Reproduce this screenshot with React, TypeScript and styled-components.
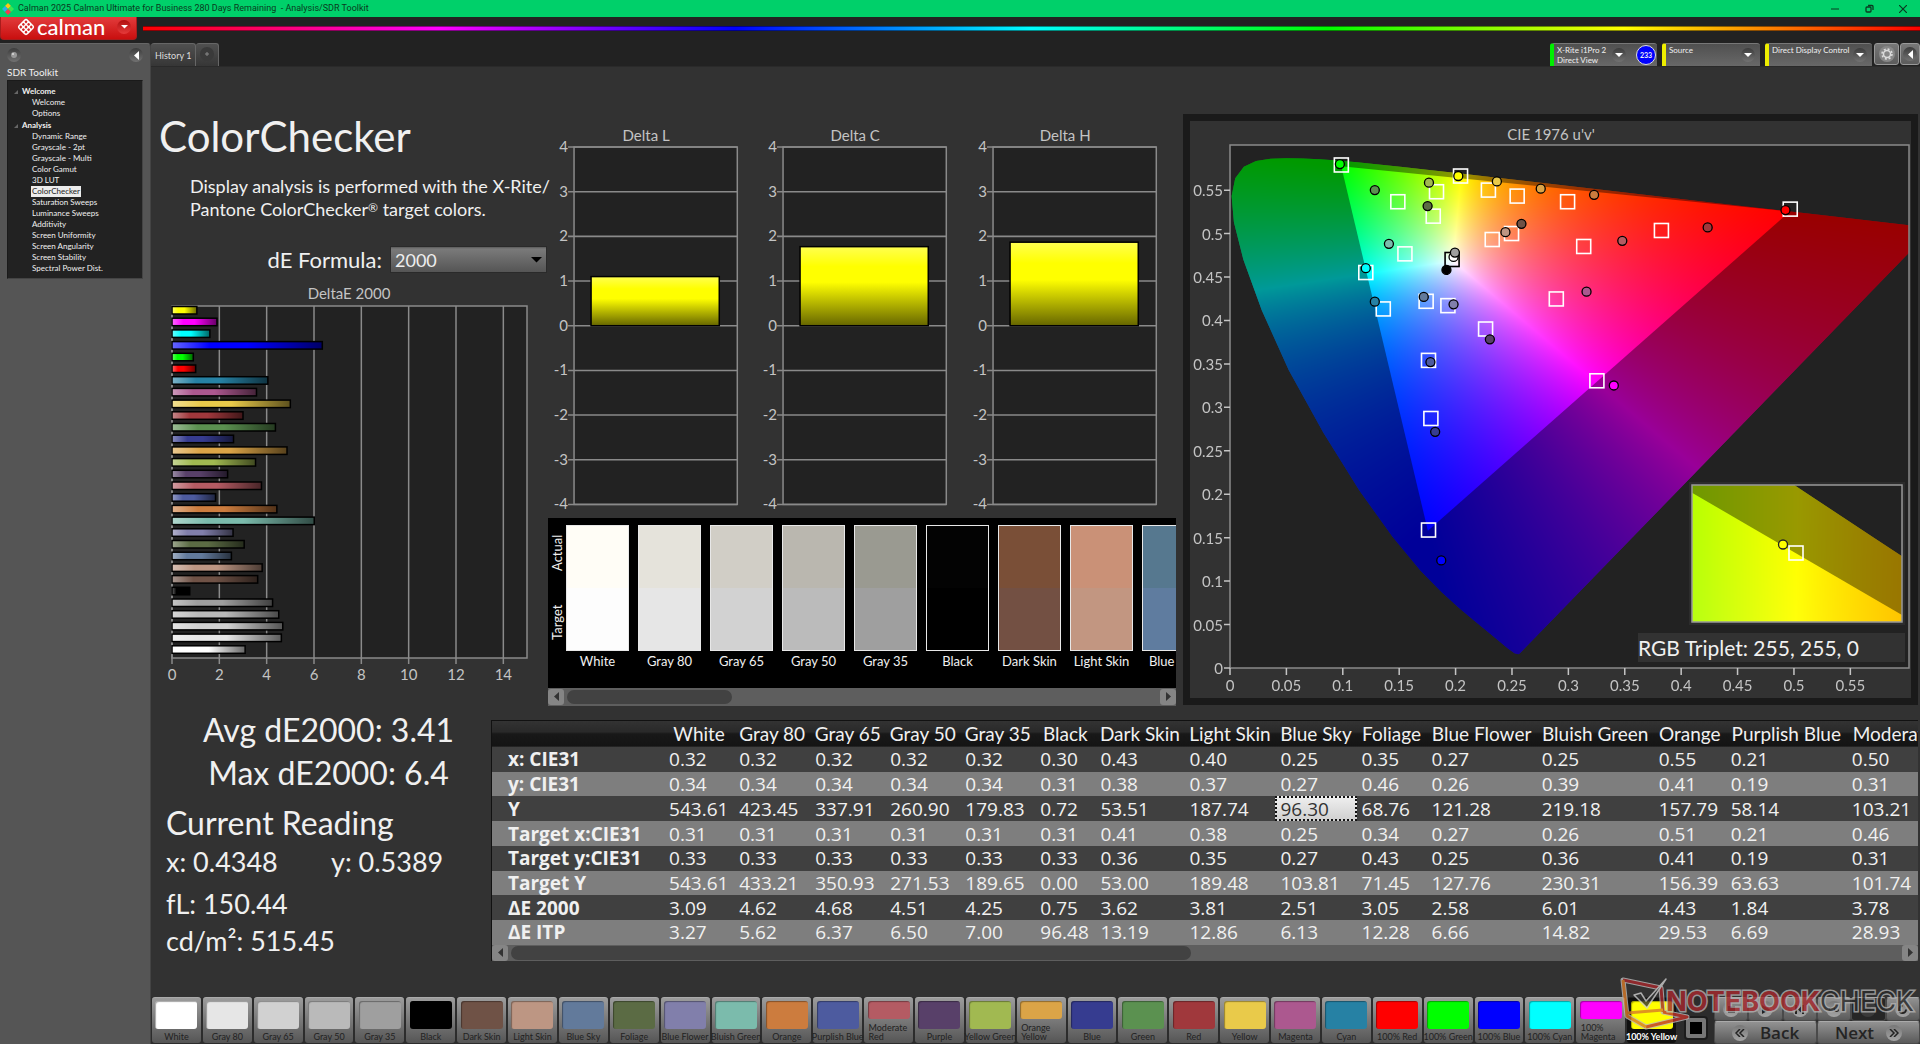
import React, { useEffect, useRef } from 'react';
import styled, { createGlobalStyle, css } from 'styled-components';

const GlobalStyle = createGlobalStyle`
  *, *::before, *::after { box-sizing: border-box; }
  html, body { margin: 0; padding: 0; background: #323232; }
  body {
    font-family: Lato, 'Open Sans', sans-serif;
    color: #f0f0f0;
    overflow: hidden;
  }
  button, select { font-family: inherit; color: inherit; margin: 0; padding: 0; border: 0; background: none; }
  h1, h2, p, ul, dl, dd { margin: 0; padding: 0; }
  ul { list-style: none; }
`;

/* ---------- data ---------- */

type Patch = { name: string; color: string; wrap?: boolean; dE: number };

const patches: Patch[] = [
  { name: 'White', color: '#ffffff', dE: 3.09 },
  { name: 'Gray 80', color: '#e6e6e6', dE: 4.62 },
  { name: 'Gray 65', color: '#d1d1d1', dE: 4.68 },
  { name: 'Gray 50', color: '#bababa', dE: 4.51 },
  { name: 'Gray 35', color: '#9f9f9f', dE: 4.25 },
  { name: 'Black', color: '#000000', dE: 0.75 },
  { name: 'Dark Skin', color: '#6f5246', dE: 3.62 },
  { name: 'Light Skin', color: '#bd9683', dE: 3.81 },
  { name: 'Blue Sky', color: '#627a9b', dE: 2.51 },
  { name: 'Foliage', color: '#5b6b44', dE: 3.05 },
  { name: 'Blue Flower', color: '#817fab', dE: 2.58 },
  { name: 'Bluish Green', color: '#7bbbac', dE: 6.01 },
  { name: 'Orange', color: '#cc7c3e', dE: 4.43 },
  { name: 'Purplish Blue', color: '#4d5b9f', dE: 1.84 },
  { name: 'Moderate Red', color: '#b45b63', wrap: true, dE: 3.78 },
  { name: 'Purple', color: '#584069', dE: 2.35 },
  { name: 'Yellow Green', color: '#a1b951', dE: 3.53 },
  { name: 'Orange Yellow', color: '#dba447', wrap: true, dE: 4.86 },
  { name: 'Blue', color: '#363c90', dE: 2.6 },
  { name: 'Green', color: '#5b9150', dE: 4.37 },
  { name: 'Red', color: '#a0383c', dE: 3.0 },
  { name: 'Yellow', color: '#e9ca4a', dE: 5.0 },
  { name: 'Magenta', color: '#ac588f', dE: 3.57 },
  { name: 'Cyan', color: '#2681a4', dE: 4.05 },
  { name: '100% Red', color: '#ff0000', dE: 1.0 },
  { name: '100% Green', color: '#00ff00', dE: 0.9 },
  { name: '100% Blue', color: '#0000ff', dE: 6.35 },
  { name: '100% Cyan', color: '#00ffff', dE: 1.6 },
  { name: '100% Magenta', color: '#ff00ff', wrap: true, dE: 1.9 },
  { name: '100% Yellow', color: '#ffff00', dE: 1.05 },
];

const swatches = [
  { name: 'White', actual: '#fffdf6', target: '#fdfdfd' },
  { name: 'Gray 80', actual: '#e5e3db', target: '#e6e6e6' },
  { name: 'Gray 65', actual: '#d1cec6', target: '#d2d2d2' },
  { name: 'Gray 50', actual: '#bab7af', target: '#bbbbbb' },
  { name: 'Gray 35', actual: '#9a9a91', target: '#9f9f9f' },
  { name: 'Black', actual: '#030303', target: '#000000' },
  { name: 'Dark Skin', actual: '#7a4f37', target: '#735043' },
  { name: 'Light Skin', actual: '#ca9177', target: '#c29681' },
  { name: 'Blue Sky', actual: '#56788f', target: '#5f7c9f' },
];

const columns = [
  { name: 'White', width: 70 },
  { name: 'Gray 80', width: 76 },
  { name: 'Gray 65', width: 75 },
  { name: 'Gray 50', width: 75 },
  { name: 'Gray 35', width: 75 },
  { name: 'Black', width: 60 },
  { name: 'Dark Skin', width: 89 },
  { name: 'Light Skin', width: 91 },
  { name: 'Blue Sky', width: 81 },
  { name: 'Foliage', width: 70 },
  { name: 'Blue Flower', width: 110 },
  { name: 'Bluish Green', width: 117 },
  { name: 'Orange', width: 72 },
  { name: 'Purplish Blue', width: 121 },
  { name: 'Moderate Red', width: 130 },
];

const readings: [string, string[]][] = [
  ['x: CIE31', ['0.32', '0.32', '0.32', '0.32', '0.32', '0.30', '0.43', '0.40', '0.25', '0.35', '0.27', '0.25', '0.55', '0.21', '0.50']],
  ['y: CIE31', ['0.34', '0.34', '0.34', '0.34', '0.34', '0.31', '0.38', '0.37', '0.27', '0.46', '0.26', '0.39', '0.41', '0.19', '0.31']],
  ['Y', ['543.61', '423.45', '337.91', '260.90', '179.83', '0.72', '53.51', '187.74', '96.30', '68.76', '121.28', '219.18', '157.79', '58.14', '103.21']],
  ['Target x:CIE31', ['0.31', '0.31', '0.31', '0.31', '0.31', '0.31', '0.41', '0.38', '0.25', '0.34', '0.27', '0.26', '0.51', '0.21', '0.46']],
  ['Target y:CIE31', ['0.33', '0.33', '0.33', '0.33', '0.33', '0.33', '0.36', '0.35', '0.27', '0.43', '0.25', '0.36', '0.41', '0.19', '0.31']],
  ['Target Y', ['543.61', '433.21', '350.93', '271.53', '189.65', '0.00', '53.00', '189.48', '103.81', '71.45', '127.76', '230.31', '156.39', '63.63', '101.74']],
  ['ΔE 2000', ['3.09', '4.62', '4.68', '4.51', '4.25', '0.75', '3.62', '3.81', '2.51', '3.05', '2.58', '6.01', '4.43', '1.84', '3.78']],
  ['ΔE ITP', ['3.27', '5.62', '6.37', '6.50', '7.00', '96.48', '13.19', '12.86', '6.13', '12.28', '6.66', '14.82', '29.53', '6.69', '28.93']],
];

const tree = [
  { title: 'Welcome', items: ['Welcome', 'Options'] },
  {
    title: 'Analysis',
    items: ['Dynamic Range', 'Grayscale - 2pt', 'Grayscale - Multi', 'Color Gamut', '3D LUT', 'ColorChecker', 'Saturation Sweeps', 'Luminance Sweeps', 'Additivity', 'Screen Uniformity', 'Screen Angularity', 'Screen Stability', 'Spectral Power Dist.'],
  },
];

const targetPoints: [number, number][] = [
  [0.0987, 0.579], [0.2044, 0.5663], [0.1831, 0.5482], [0.1488, 0.5367], [0.2291, 0.5501],
  [0.2546, 0.5432], [0.2993, 0.5367], [0.4967, 0.5282], [0.1802, 0.5201], [0.2496, 0.5001],
  [0.2325, 0.4932], [0.3825, 0.5036], [0.3136, 0.4852], [0.1551, 0.4767], [0.1204, 0.4552],
  [0.1359, 0.4133], [0.1739, 0.4221], [0.1932, 0.4171], [0.2266, 0.3902], [0.2893, 0.4248],
  [0.3253, 0.3306], [0.176, 0.3541], [0.1781, 0.2872], [0.176, 0.1588],
];

const measuredPoints: [number, number, string][] = [
  [0.0974, 0.5801, '#00ff00'], [0.2024, 0.5663, '#ffff00'], [0.1764, 0.5586, '#a1b951'],
  [0.1284, 0.5501, '#5b9150'], [0.2366, 0.5601, '#e9ca4a'], [0.2755, 0.5517, '#dba447'],
  [0.3228, 0.5447, '#cc7c3e'], [0.4925, 0.5271, '#ff0000'], [0.1752, 0.5317, '#5b6b44'],
  [0.2584, 0.5113, '#6f5246'], [0.2442, 0.5017, '#bd9683'], [0.4235, 0.5071, '#a0383c'],
  [0.3478, 0.4917, '#b45b63'], [0.1409, 0.4882, '#7bbbac'], [0.1982, 0.4732, '#ffffff'],
  [0.1994, 0.4782, '#9f9f9f'], [0.1919, 0.4582, '#000000'], [0.1204, 0.4602, '#00ffff'],
  [0.1284, 0.4217, '#2681a4'], [0.1718, 0.4271, '#627a9b'], [0.1982, 0.4186, '#817fab'],
  [0.3161, 0.4332, '#ac588f'], [0.2304, 0.3783, '#584069'], [0.3403, 0.3252, '#ff00ff'],
  [0.1777, 0.3521, '#4d5b9f'], [0.1819, 0.2718, '#363c90'], [0.1873, 0.1238, '#0000ff'],
];

/* CIE 1931 spectral locus, x and y */
const locus: [number, number][] = [
  [0.1741, 0.005], [0.1733, 0.0048], [0.1714, 0.0051], [0.1689, 0.0069], [0.1644, 0.0109],
  [0.1566, 0.0177], [0.151, 0.0227], [0.144, 0.0297], [0.1355, 0.0399], [0.1241, 0.0578],
  [0.1096, 0.0868], [0.0913, 0.1327], [0.0687, 0.2007], [0.0454, 0.295], [0.0235, 0.4127],
  [0.0082, 0.5384], [0.0039, 0.6548], [0.0139, 0.7502], [0.0389, 0.812], [0.0743, 0.8338],
  [0.1142, 0.8262], [0.1547, 0.8059], [0.1929, 0.7816], [0.2296, 0.7543], [0.2658, 0.7243],
  [0.3016, 0.6923], [0.3373, 0.6589], [0.3731, 0.6245], [0.4087, 0.5896], [0.4441, 0.5547],
  [0.4788, 0.5202], [0.5125, 0.4866], [0.5752, 0.4242], [0.627, 0.3725], [0.6658, 0.334],
  [0.6915, 0.3083], [0.719, 0.2809], [0.7347, 0.2653],
];

const gamut: [number, number][] = [[0.68, 0.32], [0.265, 0.69], [0.15, 0.06]];

const toUv = ([x, y]: [number, number]): [number, number] => {
  const d = -2 * x + 12 * y + 3;
  return [(4 * x) / d, (9 * y) / d];
};

/* ---------- window frame ---------- */

const Window = styled.div`
  display: flex;
  flex-direction: column;
  min-height: 100vh;
  background: #222;
`;

const TitleBar = styled.header`
  display: flex;
  align-items: center;
  gap: 4px;
  height: 17px;
  padding-left: 2px;
  background: #00d06a;
  color: #0a3a20;
  font: 9px/17px Roboto, 'Open Sans', sans-serif;
  white-space: pre;
`;

const WindowButtons = styled.div`
  display: flex;
  margin-left: auto;
`;

const WindowButton = styled.button`
  display: grid;
  place-items: center;
  width: 34px;
  height: 17px;
`;

const BrandBar = styled.div`
  display: flex;
  height: 26px;
  gap: 6px;
`;

const BrandButton = styled.button`
  display: flex;
  align-items: center;
  justify-content: space-between;
  width: 137px;
  height: 23px;
  padding: 0 5px 2px 16px;
  border: 1px solid #a91c1c;
  border-top: 0;
  border-radius: 0 0 4px 4px;
  background: linear-gradient(#e23c3c, #c90f0f);
  color: #fff;
`;

const BrandName = styled.span`
  display: flex;
  align-items: center;
  gap: 2px;
  font: 500 22px/20px Lato, sans-serif;
`;

const BrandArrow = styled.span`
  display: grid;
  place-items: center;
  width: 14px;
  height: 14px;
  border-radius: 50%;
  background: linear-gradient(#b01010, #e63a3a);
`;

const Rainbow = styled.div`
  flex: 1;
  height: 5px;
  margin-top: 9px;
  border: 1px solid rgba(0, 0, 0, 0.45);
  border-width: 1px 0;
  background: linear-gradient(90deg, #f00, #f0f, #00f, #0ff, #0f0, #ff0, #f00);
`;

const Body = styled.div`
  display: flex;
  flex: 1;
`;

/* ---------- sidebar ---------- */

const Sidebar = styled.aside`
  flex: 0 0 150px;
  padding: 4px 7px;
  border-top: 1px solid #666;
  border-right: 1px solid #444;
  border-radius: 0 4px 0 0;
  background: #555;
`;

const SidebarTools = styled.div`
  display: flex;
  justify-content: space-between;
  margin-bottom: 2px;
`;

const RoundButton = styled.button<{ $size: number }>`
  display: grid;
  place-items: center;
  width: ${(p) => p.$size}px;
  height: ${(p) => p.$size}px;
  border-radius: 50%;
  background: linear-gradient(#3c3c3c, #727272);
`;

const SidebarTitle = styled.h2`
  font-size: 10px;
  font-weight: 400;
  line-height: 16px;
`;

const TreeBox = styled.nav`
  width: 136px;
  padding: 4px 0;
  border: 1px solid #1a1a1a;
  border-right-color: #444;
  border-bottom-color: #444;
  background: #222;
  font-size: 8px;
`;

const TreeGroup = styled.div`
  padding-left: 14px;
  font-weight: 700;
  line-height: 11px;
`;

const TreeHeading = styled.div`
  position: relative;
  height: 12px;
  line-height: 12px;
  &::before {
    content: '';
    position: absolute;
    left: -8px;
    top: 5px;
    border: 2px solid transparent;
    border-right-color: #666;
    border-bottom-color: #666;
  }
`;

const TreeItem = styled.a<{ $active: boolean }>`
  display: block;
  width: max-content;
  margin-left: 9px;
  padding: 0 1px;
  line-height: 11px;
  font-weight: 400;
  color: #f0f0f0;
  text-decoration: none;
  ${(p) => p.$active && css`
    background: #ececec;
    color: #222;
  `}
`;

/* ---------- top tabs ---------- */

const Main = styled.main`
  display: flex;
  flex: 1;
  flex-direction: column;
  min-width: 0;
  background: #323232;
`;

const TabBar = styled.div`
  display: flex;
  height: 23px;
  background: #222;
`;

const Tab = styled.button`
  height: 23px;
  padding: 0 4px;
  border: 1px solid #666;
  border-bottom: 0;
  border-left: 0;
  border-radius: 3px 3px 0 0;
  background: linear-gradient(#505050, #363636);
  font-size: 9px;
  color: #ddd;
  & + & { color: #888; }
`;

const DeviceGroup = styled.div`
  display: flex;
  gap: 5px;
  margin-left: auto;
`;

const Device = styled.div<{ $mark: string; $width: number }>`
  display: flex;
  align-items: flex-start;
  justify-content: space-between;
  width: ${(p) => p.$width}px;
  height: 23px;
  padding: 1px 1px 0 3px;
  border-top: 1px solid #777;
  border-left: 4px solid ${(p) => p.$mark};
  border-radius: 3px 3px 0 0;
  background: linear-gradient(#505050, #686868);
  font-size: 8px;
  line-height: 10px;
  white-space: pre;
`;

const DeviceArrow = styled(RoundButton)`
  margin: 3px 4px 0 0;
`;

const Meter = styled.span`
  display: grid;
  place-items: center;
  width: 20px;
  height: 20px;
  border: 1px solid #ddd;
  border-radius: 50%;
  background: #00f;
  font-size: 7px;
  font-weight: 700;
`;

const ToolButtons = styled.div`
  display: flex;
  gap: 1px;
  margin-left: -3px;
`;

const ToolButton = styled.button<{ $width: number }>`
  display: grid;
  place-items: center;
  width: ${(p) => p.$width}px;
  height: 22px;
  border: 1px solid #999;
  border-radius: 3px;
  background: linear-gradient(#777, #5c5c5c);
`;

/* ---------- analysis area ---------- */

const Workspace = styled.div`
  flex: 1;
  display: flex;
  flex-direction: column;
  padding: 47px 2px 0 0;
  border-top: 1px solid #2a2a2a;
`;

const TopGrid = styled.section`
  display: grid;
  grid-template-columns: 397fr 628fr 7px 735fr;
  align-items: start;
`;

const Intro = styled.div`
  display: flex;
  flex-direction: column;
  min-width: 0;
`;

const Title = styled.h1`
  padding: 0 0 0 8px;
  font-size: 42px;
  font-weight: 400;
  line-height: 44px;
`;

const Description = styled.p`
  margin: 17px 0 0 39px;
  font-size: 18px;
  line-height: 23px;
  white-space: nowrap;
`;

const Registered = styled.span`
  font-size: 12px;
  line-height: 12px;
  vertical-align: 4px;
`;

const FormulaRow = styled.div`
  display: flex;
  align-items: center;
  justify-content: flex-end;
  gap: 8px;
  margin-top: 25px;
  padding-right: 1px;
  font-size: 22px;
  line-height: 26px;
`;

const SelectWrap = styled.div`
  position: relative;
  height: 27px;
  svg { position: absolute; right: 5px; top: 11px; pointer-events: none; }
`;

const Select = styled.select`
  appearance: none;
  display: block;
  width: 157px;
  height: 27px;
  padding: 0 4px;
  border: 1px solid #2a2a2a;
  background: linear-gradient(#5a5a5a, #7a7a7a 8%, #555);
  font-size: 18px;
  color: #eee;
  cursor: pointer;
`;

const Chart = styled.svg`
  display: block;
  width: 100%;
  height: auto;
  font-family: Lato, 'Open Sans', sans-serif;
  font-size: 15px;
`;

const DeltaEBox = styled.div`
  margin-top: 11px;
`;

const Middle = styled.div`
  min-width: 0;
  padding-top: 10px;
`;

const DeltaRow = styled.div`
  display: grid;
  grid-template-columns: repeat(3, 1fr);
`;

const SwatchPanel = styled.div`
  display: flex;
  height: 170px;
  overflow: hidden;
  background: #000;
`;

const SwatchAxis = styled.div`
  display: flex;
  flex: 0 0 18px;
  flex-direction: column-reverse;
  justify-content: flex-end;
  align-items: center;
  padding-top: 7px;
  font-size: 13px;
  line-height: 18px;
  span {
    height: 55px;
    writing-mode: vertical-rl;
    transform: rotate(180deg);
    text-align: center;
  }
  span + span { margin-bottom: 15px; }
`;

const SwatchTrack = styled.ul`
  display: flex;
  gap: 9px;
  padding-top: 7px;
`;

const Swatch = styled.li`
  flex: 0 0 63px;
  font-size: 13px;
  line-height: 20px;
  text-align: center;
  white-space: nowrap;
`;

const SwatchColors = styled.div<{ $actual: string; $target: string }>`
  height: 126px;
  border: 1px solid #e8e8e8;
  background: linear-gradient(${(p) => p.$actual} 50%, ${(p) => p.$target} 50%);
`;

const ScrollBar = styled.div<{ $height: number }>`
  display: flex;
  align-items: center;
  height: ${(p) => p.$height}px;
  background: #5e5e5e;
`;

const ScrollArrow = styled.button`
  display: grid;
  place-items: center;
  flex: 0 0 16px;
  height: 16px;
  border-radius: 3px;
  background: #858585;
`;

const ScrollTrack = styled.div`
  flex: 1;
  height: 14px;
  padding: 0 3px;
`;

const ScrollThumb = styled.div<{ $share: number }>`
  width: ${(p) => p.$share}%;
  height: 14px;
  border-radius: 7px;
  background: #424242;
`;

const CiePanel = styled.div`
  grid-column: 4;
  border: 7px solid #1a1a1a;
  background: #323232;
`;

/* ---------- readings ---------- */

const BottomGrid = styled.section`
  display: grid;
  grid-template-columns: minmax(0, 340fr) minmax(0, 1427fr);
`;

const Stats = styled.div`
  padding: 2px 0 0 15px;
  white-space: nowrap;
`;

const Summary = styled.p`
  font-size: 32px;
  line-height: 43px;
  text-align: center;
`;

const StatsHeading = styled.h2`
  margin-top: 8px;
  font-size: 32px;
  font-weight: 400;
  line-height: 42px;
`;

const StatLine = styled.p<{ $height: number }>`
  display: flex;
  font-size: 27px;
  line-height: ${(p) => p.$height}px;
  span:first-child { flex: 0 0 165px; }
`;

const TablePanel = styled.div`
  min-width: 0;
  margin-top: 14px;
  overflow: hidden;
  border-left: 1px solid #111;
`;

const TableClip = styled.div`
  overflow: hidden;
`;

const Table = styled.table`
  table-layout: fixed;
  width: 1485px;
  height: 225px;
  border-collapse: collapse;
  font: 19px/20px 'Open Sans', 'Noto Sans', sans-serif;
  color: #f0f0f0;
`;

const HeadCell = styled.th`
  height: 27px;
  padding: 0 4px;
  border-top: 1px solid #111;
  background: linear-gradient(#333, #292929 45%, #181818 50%, #141414);
  font: 400 19px/20px Lato, sans-serif;
  text-align: center;
  white-space: nowrap;
`;

const Row = styled.tr`
  background: #404040;
  &:nth-child(even) { background: #7e7e7e; }
`;

const RowLabel = styled.th`
  padding: 0 0 0 16px;
  font-weight: 700;
  text-align: left;
  white-space: nowrap;
`;

const Cell = styled.td<{ $selected: boolean }>`
  padding: 0 0 0 5px;
  ${(p) => p.$selected && css`
    outline: 2px dotted #111;
    outline-offset: -2px;
    background: linear-gradient(#f0f0f0, #cfcfcf);
    color: #333;
  `}
`;

/* ---------- bottom strip ---------- */

const Strip = styled.footer`
  position: relative;
  display: flex;
  height: 47px;
  padding-left: 1px;
  background: #2c2c2c;
`;

const PatchList = styled.div`
  display: grid;
  flex: 1;
  grid-template-columns: repeat(30, minmax(0, 1fr));
  height: 46px;
`;

const PatchButton = styled.button<{ $selected: boolean }>`
  display: flex;
  flex-direction: column;
  align-items: center;
  margin-right: 2px;
  padding-top: 3px;
  border-top: 1px solid #aaa;
  border-radius: 3px;
  background: linear-gradient(#9c9c9c, #555);
  color: #222;
  font-size: 9px;
  line-height: 9px;
  white-space: nowrap;
  ${(p) => p.$selected && css`
    border-color: #222;
    background: #111;
    color: #fff;
    font-weight: 700;
  `}
`;

const PatchColor = styled.span<{ $color: string; $short: boolean }>`
  width: 42px;
  height: ${(p) => (p.$short ? 18 : 28)}px;
  margin-bottom: ${(p) => (p.$short ? 4 : 3)}px;
  border-radius: 3px;
  background: ${(p) => p.$color};
  box-shadow: inset 1px 1px 1px rgba(0, 0, 0, 0.35);
`;

const PatchName = styled.span<{ $wrap: boolean }>`
  ${(p) => p.$wrap && css`
    width: 40px;
    text-align: left;
    white-space: normal;
  `}
`;

const StopCell = styled.div`
  display: grid;
  place-items: end center;
  width: 36px;
  padding-bottom: 4px;
`;

const StopButton = styled.button`
  display: grid;
  place-items: center;
  width: 24px;
  height: 24px;
  border: 2px solid #1c1c1c;
  border-radius: 4px;
  background: #777;
`;

const Transport = styled.div`
  display: grid;
  grid-template-rows: 24px 23px;
  width: 206px;
`;

const TransportRow = styled.div`
  display: flex;
`;

const TransportButton = styled.button<{ $dark?: boolean }>`
  display: flex;
  align-items: center;
  justify-content: center;
  flex: 1;
  gap: 12px;
  border: 1px solid #4a4a4a;
  border-top-color: #aaa;
  border-radius: 3px;
  background: ${(p) => (p.$dark ? '#262626' : 'linear-gradient(#929292, #5a5a5a)')};
  color: #242424;
  font: 600 17px/18px 'Open Sans', sans-serif;
`;

const Disc = styled.span<{ $dim?: boolean }>`
  display: grid;
  place-items: center;
  width: 16px;
  height: 16px;
  border-radius: 50%;
  background: ${(p) => (p.$dim ? '#3a3a3a' : 'linear-gradient(#777, #a5a5a5)')};
`;

const Watermark = styled.div`
  position: absolute;
  right: 6px;
  bottom: 13px;
  display: flex;
  align-items: center;
  pointer-events: none;
  opacity: 0.8;
`;

const WatermarkText = styled.span`
  margin: -4px 0 0 -26px;
  font: 400 27px/30px Inter, sans-serif;
  color: #2b2b2b;
  -webkit-text-stroke: 3px #b0b0b0;
  paint-order: stroke fill;
  b { color: #a5282c; font-weight: 700; }
`;

/* ---------- small drawings ---------- */

const ArrowDown = ({ size = 8, color = '#fff' }: { size?: number; color?: string }) => (
  <svg width={size} height={size / 2} viewBox="0 0 8 4"><path d="M0 0h8L4 4z" fill={color} /></svg>
);

const ArrowSide = ({ right = false, color = '#fff' }: { right?: boolean; color?: string }) => (
  <svg width="5" height="9" viewBox="0 0 5 9"><path d={right ? 'M0 0v9l5-4.500z' : 'M5 0v9l-5-4.500z'} fill={color} /></svg>
);

const CalmanIcon = () => (
  <svg width="18" height="20" viewBox="0 0 18 20">
    <g transform="translate(9 10) rotate(45)">
      <rect x="-6.500" y="-6.500" width="13" height="13" rx="3" fill="#fff" />
      {[-3.7, 0, 3.7].map((x) => [-3.7, 0, 3.7].map((y) => (
        <rect key={`${x}${y}`} x={x - 1.2} y={y - 1.2} width="2.400" height="2.400" rx=".8" fill="#d42525" />
      )))}
    </g>
  </svg>
);

const AppIcon = () => (
  <svg width="12" height="14" viewBox="0 0 12 14">
    <path d="M6 1l3 3-3 3-3-3z" fill="#ffc814" />
    <path d="M3 4l3 3-3 3-3-3z" fill="#28b4e6" />
    <path d="M9 4l3 3-3 3-3-3z" fill="#3ce650" />
    <path d="M6 7l3 3-3 3-3-3z" fill="#f03c50" />
  </svg>
);

/* ---------- charts ---------- */

const LINE = '#8a8a8a';
const PLOT = '#222';
const LABEL = '#c4c4c4';

function DeltaEChart() {
  const left = 21;
  const right = 376;
  const top = 22;
  const bottom = 374;
  const unit = (right - left) / 15;
  const bars = [...patches].reverse();
  return (
    <Chart viewBox="0 0 397 403" role="img" aria-label="DeltaE 2000">
      <defs>
        <linearGradient id="barShade">
          <stop offset="0" stopColor="#fff" stopOpacity=".4" />
          <stop offset=".25" stopColor="#fff" stopOpacity="0" />
          <stop offset=".5" stopColor="#000" stopOpacity="0" />
          <stop offset="1" stopColor="#000" stopOpacity=".6" />
        </linearGradient>
      </defs>
      <text x="198" y="15" textAnchor="middle" fill={LABEL}>DeltaE 2000</text>
      <rect x={left} y={top} width={right - left} height={bottom - top} fill={PLOT} stroke={LINE} strokeWidth="1.500" />
      {[0, 2, 4, 6, 8, 10, 12, 14].map((n) => (
        <g key={n}>
          <path d={`M${left + n * unit} ${top}V${bottom + 6}`} stroke={LINE} strokeWidth="1.500" />
          <text x={left + n * unit} y={bottom + 22} textAnchor="middle" fill={LABEL}>{n}</text>
        </g>
      ))}
      {bars.map((b, i) => {
        const y = 22.5 + i * 11.7;
        return (
          <g key={b.name}>
            <rect x={left} y={y} width={b.dE * unit} height="7.500" fill={b.color} />
            <rect x={left} y={y} width={b.dE * unit} height="7.500" fill="url(#barShade)" stroke="#000" strokeWidth="1.500" />
          </g>
        );
      })}
    </Chart>
  );
}

function DeltaChart({ title, value }: { title: string; value: number }) {
  const left = 26;
  const right = 189;
  const top = 23;
  const unit = 44.6;
  const zero = top + 4 * unit;
  return (
    <Chart viewBox="0 0 209 393" role="img" aria-label={title}>
      <defs>
        <linearGradient id="yellowBar" x2="0" y2="1">
          <stop offset="0" stopColor="#ffff50" />
          <stop offset=".25" stopColor="#ffff00" />
          <stop offset=".45" stopColor="#ffff00" />
          <stop offset="1" stopColor="#666600" />
        </linearGradient>
      </defs>
      <text x="98" y="17" textAnchor="middle" fill={LABEL}>{title}</text>
      <rect x={left} y={top} width={right - left} height={8 * unit} fill={PLOT} />
      {[4, 3, 2, 1, 0, -1, -2, -3, -4].map((n) => (
        <g key={n}>
          <path d={`M${left - 6} ${zero - n * unit}H${right}`} stroke={LINE} strokeWidth="1.500" />
          <text x={left - 6} y={zero - n * unit + 5} textAnchor="end" fill={LABEL}>{n}</text>
        </g>
      ))}
      <rect x={left} y={top} width={right - left} height={8 * unit} fill="none" stroke={LINE} strokeWidth="1.500" />
      <rect x="43" y={zero - value * unit} width="128" height={value * unit} fill="url(#yellowBar)" stroke="#000" strokeWidth="1.500" />
    </Chart>
  );
}

type Range = { u0: number; u1: number; v0: number; v1: number; gamma: number };

function paintGamut(canvas: HTMLCanvasElement, { u0, u1, v0, v1, gamma }: Range) {
  const { width, height } = canvas;
  const ctx = canvas.getContext('2d');
  const full = document.createElement('canvas');
  full.width = width;
  full.height = height;
  const fullCtx = full.getContext('2d');
  if (!ctx || !fullCtx) return;
  const pixels = fullCtx.createImageData(width, height);
  for (let j = 0; j < height; j += 1) {
    const v = v1 - ((j + 0.5) / height) * (v1 - v0);
    for (let i = 0; i < width; i += 1) {
      const u = u0 + ((i + 0.5) / width) * (u1 - u0);
      const X = (9 * u) / (4 * v);
      const Z = (12 - 3 * u - 20 * v) / (4 * v);
      const r = Math.max(0, 2.4935 * X - 0.9314 - 0.4027 * Z);
      const g = Math.max(0, -0.8295 * X + 1.7627 + 0.0236 * Z);
      const b = Math.max(0, 0.0358 * X - 0.0762 + 0.9569 * Z);
      const peak = Math.max(r, g, b) || 1;
      const k = (j * width + i) * 4;
      pixels.data[k] = 255 * (r / peak) ** gamma;
      pixels.data[k + 1] = 255 * (g / peak) ** gamma;
      pixels.data[k + 2] = 255 * (b / peak);
      pixels.data[k + 3] = 255;
    }
  }
  fullCtx.putImageData(pixels, 0, 0);
  const clipTo = (points: [number, number][]) => {
    ctx.beginPath();
    points.map(toUv).forEach(([u, v]) => ctx.lineTo(((u - u0) / (u1 - u0)) * width, ((v1 - v) / (v1 - v0)) * height));
    ctx.closePath();
    ctx.clip();
  };
  ctx.clearRect(0, 0, width, height);
  ctx.save();
  clipTo(locus);
  ctx.drawImage(full, 0, 0);
  ctx.fillStyle = 'rgba(0, 0, 0, 0.4)';
  ctx.fillRect(0, 0, width, height);
  ctx.restore();
  ctx.save();
  clipTo(gamut);
  ctx.drawImage(full, 0, 0);
  ctx.restore();
}

function GamutCanvas({ width, height, range }: { width: number; height: number; range: Range }) {
  const ref = useRef<HTMLCanvasElement>(null);
  useEffect(() => {
    if (ref.current) paintGamut(ref.current, range);
  }, [range]);
  return <canvas ref={ref} width={width} height={height} />;
}

const fullRange: Range = { u0: 0, u1: 0.602, v0: 0, v1: 0.602, gamma: 1 };
const insetRange: Range = { u0: 0.168, u1: 0.2414, v0: 0.5584, v1: 0.5692, gamma: 0.6 };

function CieChart() {
  const left = 40;
  const top = 24;
  const width = 679;
  const height = 523;
  const px = (u: number) => left + (u / 0.602) * width;
  const py = (v: number) => top + height - (v / 0.602) * height;
  const ticks = [0, 0.05, 0.1, 0.15, 0.2, 0.25, 0.3, 0.35, 0.4, 0.45, 0.5, 0.55];
  return (
    <Chart viewBox="0 0 721 577" role="img" aria-label="CIE 1976 u'v'">
      <text x="361" y="19" textAnchor="middle" fill={LABEL}>CIE 1976 u'v'</text>
      <rect x={left} y={top} width={width} height={height} fill={PLOT} />
      <foreignObject x={left} y={top} width={width} height={height}>
        <GamutCanvas width={width} height={height} range={fullRange} />
      </foreignObject>
      <rect x={left} y={top} width={width} height={height} fill="none" stroke={LINE} strokeWidth="1.500" />
      {ticks.map((t) => (
        <g key={t}>
          <path d={`M${px(t)} ${top + height}v7M${left} ${py(t)}h-6`} stroke={LABEL} strokeWidth="1.500" />
          <text x={px(t)} y={top + height + 23} textAnchor="middle" fill={LABEL}>{t}</text>
          <text x={left - 7} y={py(t) + 6} textAnchor="end" fill={LABEL}>{t}</text>
        </g>
      ))}
      {targetPoints.map(([u, v]) => (
        <rect key={`${u}-${v}`} x={px(u) - 7} y={py(v) - 7} width="14" height="14" fill="none" stroke="#fff" strokeWidth="1.600" />
      ))}
      <rect x={px(0.1969) - 7} y={py(0.4702) - 7} width="14" height="14" fill="none" stroke="#000" strokeWidth="1.600" />
      {measuredPoints.map(([u, v, c]) => (
        <circle key={`${u}-${v}`} cx={px(u)} cy={py(v)} r="4.500" fill={c} stroke="#000" strokeWidth="1.300" />
      ))}
      <rect x="499" y="361" width="216" height="143" fill="#2c2c2c" />
      <rect x="502" y="364" width="210" height="137" fill={PLOT} />
      <foreignObject x="502" y="364" width="210" height="137">
        <GamutCanvas width={210} height={137} range={insetRange} />
      </foreignObject>
      <rect x="502" y="364" width="210" height="137" fill="none" stroke="#999" strokeWidth="1.500" />
      <circle cx="593" cy="423.500" r="4.500" fill="#ff0" stroke="#222" strokeWidth="1.300" />
      <rect x="599" y="425" width="14" height="14" fill="none" stroke="#fff" strokeWidth="1.600" />
      <rect x="448" y="512" width="267" height="29" fill="#323232" />
      <text x="448" y="535" fontSize="21" fill="#f0f0f0">RGB Triplet: 255, 255, 0</text>
    </Chart>
  );
}

/* ---------- page ---------- */

const Scroll = ({ height, share, name }: { height: number; share: number; name: string }) => (
  <ScrollBar $height={height}>
    <ScrollArrow aria-label={`Scroll ${name} left`}><ArrowSide color="#333" /></ScrollArrow>
    <ScrollTrack><ScrollThumb $share={share} /></ScrollTrack>
    <ScrollArrow aria-label={`Scroll ${name} right`}><ArrowSide right color="#333" /></ScrollArrow>
  </ScrollBar>
);

const transportIcons = [
  'M4 4h7v7H4z',
  'M4 3l8 4.500-8 4.500z',
  'M3 3h2v9H3zM10 3h2v9h-2zM6 7.500l3-3v6z',
  'M2 7.500a2.500 2.500 0 1 1 5 0a2.500 2.500 0 1 0 5 0h-1a1.500 1.500 0 1 1-3 0a2.500 2.500 0 1 0-5 0z',
  'M5 5h5v5H5z',
  'M7.500 3a4.500 4.500 0 1 0 4.500 4.500h-2a2.500 2.500 0 1 1-2.500-2.500z',
];
const transportNames = ['Stop', 'Play', 'Step', 'Continuous', 'Pattern', 'Refresh'];

export default function App() {
  return (
    <Window>
      <GlobalStyle />
      <TitleBar>
        <AppIcon />
        <span>Calman 2025 Calman Ultimate for Business 280 Days Remaining  - Analysis/SDR Toolkit</span>
        <WindowButtons>
          <WindowButton aria-label="Minimize">
            <svg width="8" height="8" viewBox="0 0 8 8"><path d="M0 4h8" stroke="#0a3a20" /></svg>
          </WindowButton>
          <WindowButton aria-label="Restore">
            <svg width="9" height="9" viewBox="0 0 9 9" fill="none" stroke="#0a3a20" strokeWidth="1.300">
              <rect x="1" y="3" width="5" height="5" rx="1" /><path d="M3 1.500h4q1 0 1 1V6" />
            </svg>
          </WindowButton>
          <WindowButton aria-label="Close">
            <svg width="8" height="8" viewBox="0 0 8 8"><path d="M0 0l8 8M8 0L0 8" stroke="#0a3a20" strokeWidth="1.200" /></svg>
          </WindowButton>
        </WindowButtons>
      </TitleBar>
      <BrandBar>
        <BrandButton>
          <BrandName><CalmanIcon />calman</BrandName>
          <BrandArrow><ArrowDown size={7} /></BrandArrow>
        </BrandButton>
        <Rainbow />
      </BrandBar>
      <Body>
        <Sidebar>
          <SidebarTools>
            <RoundButton $size={14} aria-label="Record">
              <svg width="8" height="8" viewBox="0 0 8 8"><circle cx="4" cy="4" r="3" fill="#999" /><circle cx="3" cy="3" r="1" fill="#ddd" /></svg>
            </RoundButton>
            <RoundButton $size={14} aria-label="Collapse sidebar"><ArrowSide /></RoundButton>
          </SidebarTools>
          <SidebarTitle>SDR Toolkit</SidebarTitle>
          <TreeBox>
            {tree.map((group) => (
              <TreeGroup key={group.title}>
                <TreeHeading>{group.title}</TreeHeading>
                {group.items.map((item) => (
                  <TreeItem key={item} href="#" $active={item === 'ColorChecker'}>{item}</TreeItem>
                ))}
              </TreeGroup>
            ))}
          </TreeBox>
        </Sidebar>
        <Main>
          <TabBar>
            <Tab>History 1</Tab>
            <Tab aria-label="Add history">
              <svg width="14" height="14" viewBox="0 0 14 14"><circle cx="7" cy="7" r="7" fill="#3a3a3a" /><path d="M5 7h4M7 5v4" stroke="#888" /></svg>
            </Tab>
            <DeviceGroup>
              <Device $mark="#00ee00" $width={107}>
                <span>{'X-Rite i1Pro 2\nDirect View'}</span>
                <DeviceArrow $size={14} aria-label="Meter menu"><ArrowDown /></DeviceArrow>
                <Meter>233</Meter>
              </Device>
              <Device $mark="#eeee00" $width={98}>
                <span>Source</span>
                <DeviceArrow $size={14} aria-label="Source menu"><ArrowDown /></DeviceArrow>
              </Device>
              <Device $mark="#eeee00" $width={107}>
                <span>Direct Display Control</span>
                <DeviceArrow $size={14} aria-label="Display menu"><ArrowDown /></DeviceArrow>
              </Device>
              <ToolButtons>
                <ToolButton $width={25} aria-label="Settings">
                  <svg width="16" height="16" viewBox="0 0 16 16" fill="none" stroke="#ddd">
                    <circle cx="8" cy="8" r="8" fill="#888" stroke="none" />
                    <circle cx="8" cy="8" r="3.500" strokeWidth="1.500" />
                    <circle cx="8" cy="8" r="5" strokeWidth="1.500" strokeDasharray="2 1.930" />
                  </svg>
                </ToolButton>
                <ToolButton $width={20} aria-label="Collapse toolbar"><RoundButton as="span" $size={14}><ArrowSide /></RoundButton></ToolButton>
              </ToolButtons>
            </DeviceGroup>
          </TabBar>

          <Workspace>
            <TopGrid>
              <Intro>
                <Title>ColorChecker</Title>
                <Description>
                  Display analysis is performed with the X-Rite/<br />
                  Pantone ColorChecker<Registered>®</Registered> target colors.
                </Description>
                <FormulaRow>
                  <label htmlFor="formula">dE Formula:</label>
                  <SelectWrap>
                    <Select id="formula" defaultValue="2000"><option>2000</option></Select>
                    <ArrowDown size={11} color="#000" />
                  </SelectWrap>
                </FormulaRow>
                <DeltaEBox><DeltaEChart /></DeltaEBox>
              </Intro>
              <Middle>
                <DeltaRow>
                  <DeltaChart title="Delta L" value={1.1} />
                  <DeltaChart title="Delta C" value={1.77} />
                  <DeltaChart title="Delta H" value={1.87} />
                </DeltaRow>
                <SwatchPanel>
                  <SwatchAxis><span>Target</span><span>Actual</span></SwatchAxis>
                  <SwatchTrack>
                    {swatches.map((s) => (
                      <Swatch key={s.name}>
                        <SwatchColors $actual={s.actual} $target={s.target} />
                        {s.name}
                      </Swatch>
                    ))}
                  </SwatchTrack>
                </SwatchPanel>
                <Scroll height={18} share={28} name="swatches" />
              </Middle>
              <CiePanel><CieChart /></CiePanel>
            </TopGrid>

            <BottomGrid>
              <Stats>
                <Summary>Avg dE2000: 3.41</Summary>
                <Summary>Max dE2000: 6.4</Summary>
                <StatsHeading>Current Reading</StatsHeading>
                <StatLine $height={36}><span>x: 0.4348</span><span>y: 0.5389</span></StatLine>
                <StatLine $height={48}>fL: 150.44</StatLine>
                <StatLine $height={26}>cd/m²: 515.45</StatLine>
              </Stats>
              <TablePanel>
                <TableClip>
                  <Table>
                    <colgroup>
                      <col width="172" />
                      {columns.map((c) => <col key={c.name} width={c.width} />)}
                    </colgroup>
                    <thead>
                      <tr>
                        <HeadCell as="td" />
                        {columns.map((c) => <HeadCell key={c.name} scope="col">{c.name}</HeadCell>)}
                      </tr>
                    </thead>
                    <tbody>
                      {readings.map(([label, values]) => (
                        <Row key={label}>
                          <RowLabel scope="row">{label}</RowLabel>
                          {values.map((v, i) => (
                            <Cell key={columns[i].name} $selected={label === 'Y' && i === 8}>{v}</Cell>
                          ))}
                        </Row>
                      ))}
                    </tbody>
                  </Table>
                </TableClip>
                <Scroll height={16} share={49} name="readings" />
              </TablePanel>
            </BottomGrid>
          </Workspace>

          <Strip>
            <PatchList>
              {patches.map((p) => (
                <PatchButton key={p.name} $selected={p.name === '100% Yellow'}>
                  <PatchColor $color={p.color} $short={!!p.wrap} />
                  <PatchName $wrap={!!p.wrap}>{p.name}</PatchName>
                </PatchButton>
              ))}
            </PatchList>
            <StopCell>
              <StopButton aria-label="Stop reading">
                <svg width="12" height="12" viewBox="0 0 12 12"><path d="M0 0h12v12H0z" fill="#000" /></svg>
              </StopButton>
            </StopCell>
            <Transport>
              <TransportRow>
                {transportIcons.map((d, i) => (
                  <TransportButton key={d} $dark={i === 4} aria-label={transportNames[i]}>
                    <Disc $dim={i === 4}><svg width="15" height="15" viewBox="0 0 15 15"><path d={d} fill="#222" /></svg></Disc>
                  </TransportButton>
                ))}
              </TransportRow>
              <TransportRow>
                <TransportButton>
                  <Disc><svg width="10" height="8" viewBox="0 0 10 8" fill="none" stroke="#222" strokeWidth="1.500"><path d="M5 0L1 4l4 4M9 0L5 4l4 4" /></svg></Disc>
                  Back
                </TransportButton>
                <TransportButton>
                  Next
                  <Disc><svg width="10" height="8" viewBox="0 0 10 8" fill="none" stroke="#222" strokeWidth="1.500"><path d="M1 0l4 4-4 4M5 0l4 4-4 4" /></svg></Disc>
                </TransportButton>
              </TransportRow>
            </Transport>
            <Watermark>
              <svg width="72" height="54" viewBox="0 0 72 54" fill="none" strokeLinejoin="round">
                <path d="M3 3l38 8 2 24 24 5-41 10L7 39z" stroke="#bbb" strokeWidth="5" />
                <path d="M3 3l38 8 2 24" stroke="#a5282c" strokeWidth="3" />
                <path d="M43 35l24 5-41 10" stroke="#c0342c" strokeWidth="3" />
                <path d="M3 3l4 36 19 11M7 36l36-3" stroke="#d87a28" strokeWidth="3" />
                <path d="M14 18l7-2 5 8L46 2 27 31z" fill="#333" stroke="#ccc" strokeWidth="1.500" />
              </svg>
              <WatermarkText><b>NOTEBOOK</b>CHECK</WatermarkText>
            </Watermark>
          </Strip>
        </Main>
      </Body>
    </Window>
  );
}
